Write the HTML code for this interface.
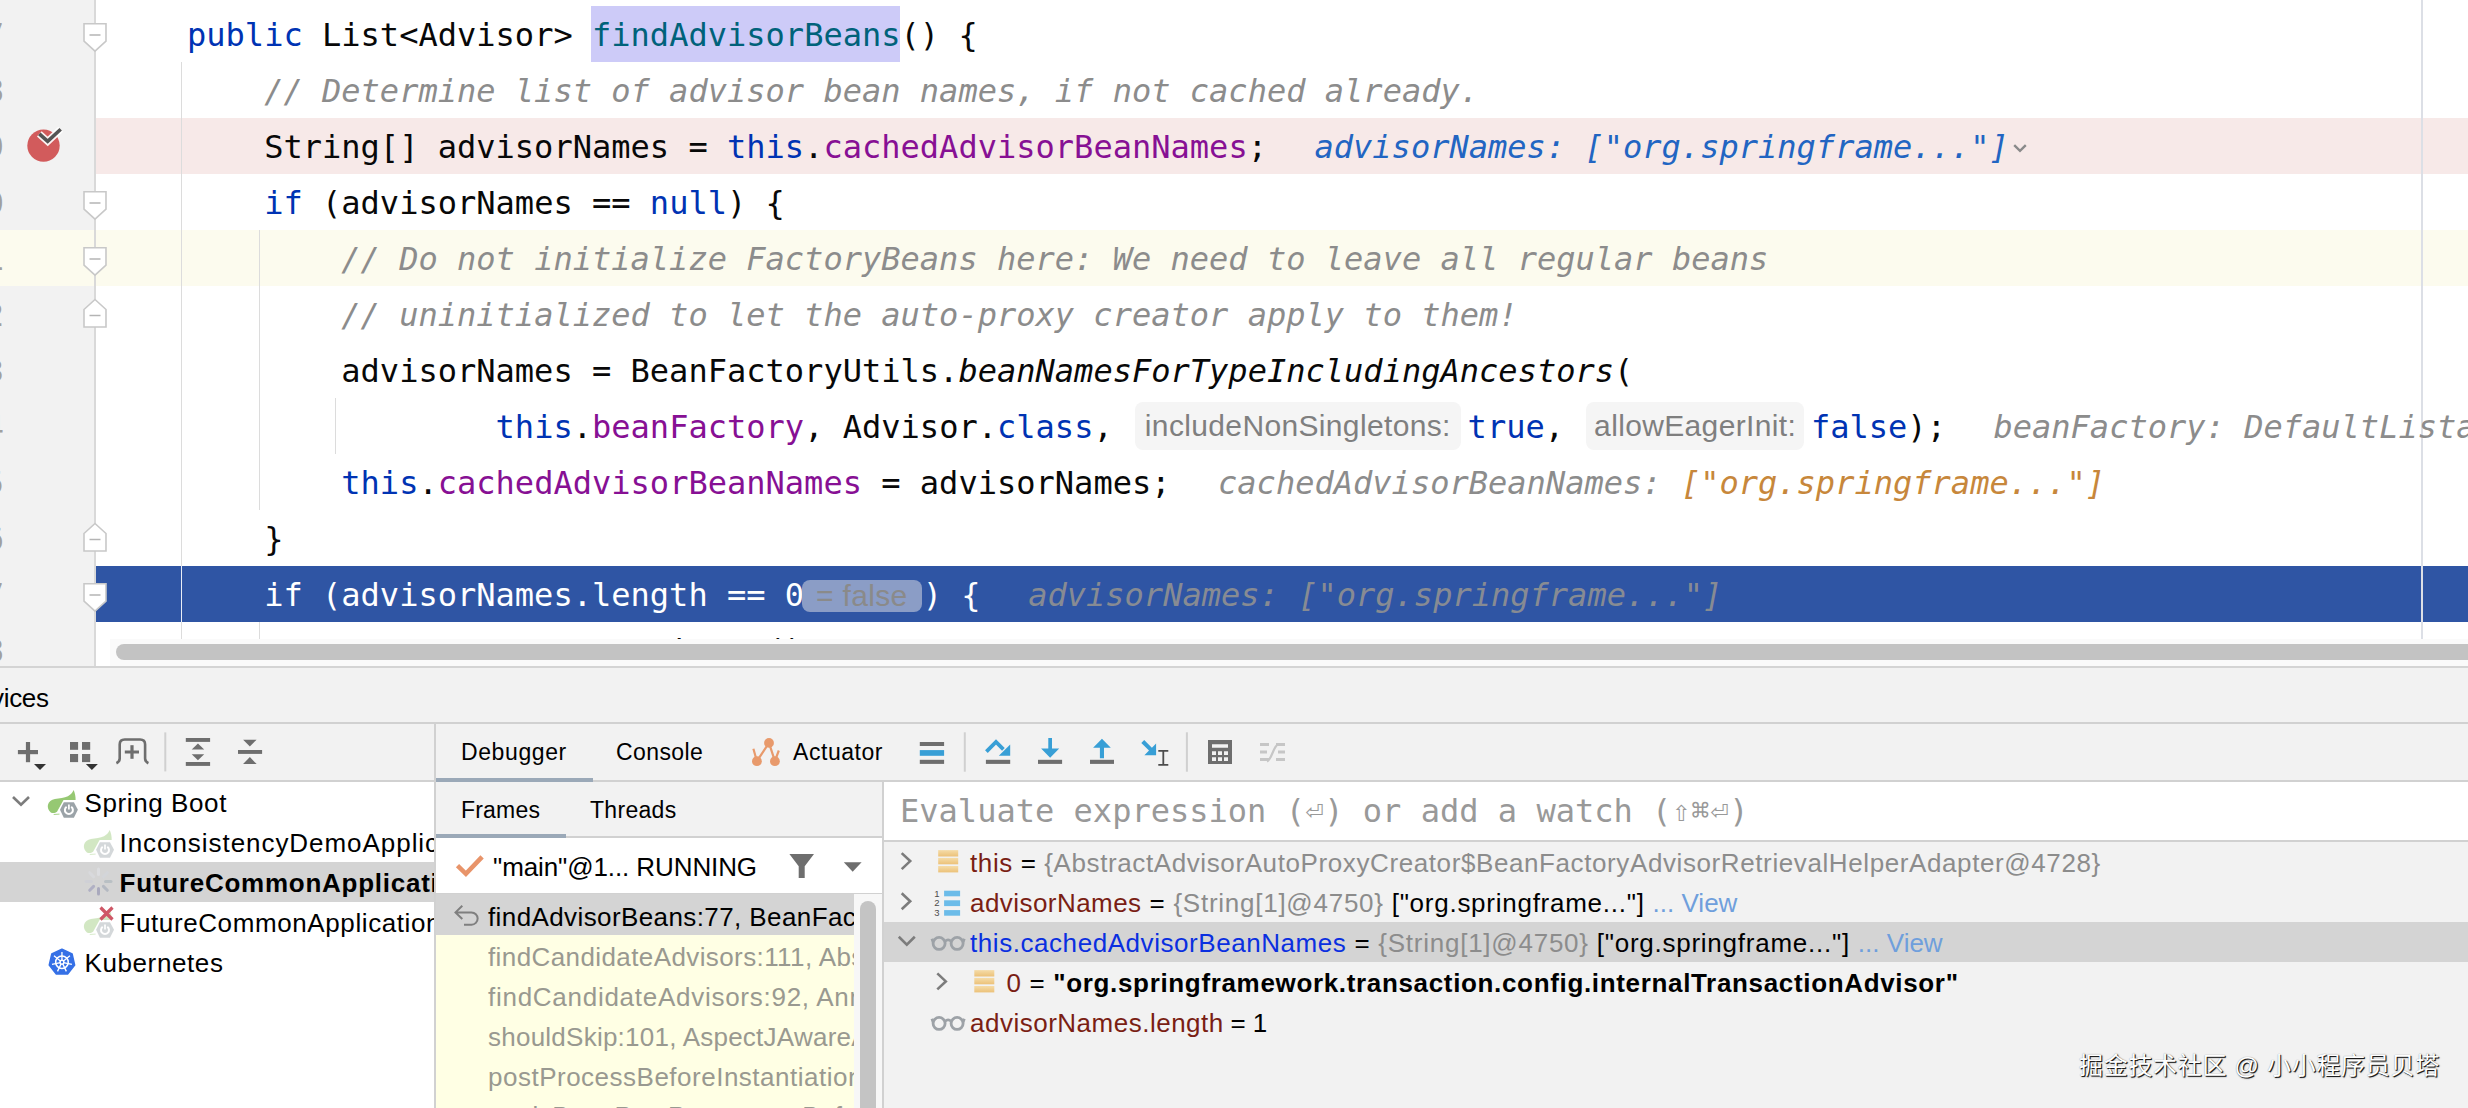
<!DOCTYPE html>
<html lang="en">
<head>
<meta charset="utf-8">
<title>Debugger</title>
<style>
*{box-sizing:border-box;margin:0;padding:0}
html,body{width:2468px;height:1108px;overflow:hidden;background:#f2f2f2}
body{position:relative;font-family:"Liberation Sans","DejaVu Sans",sans-serif;color:#000}
.abs{position:absolute}
/* ---------- editor ---------- */
#editor{position:absolute;left:0;top:0;width:2468px;height:667px;background:#fff;overflow:hidden}
#gutter{position:absolute;left:0;top:0;width:95px;height:667px;background:#f2f2f2}
#gline{position:absolute;left:94px;top:0;width:2px;height:667px;background:#d9d9d9}
.row{position:absolute;left:0;width:2468px;height:56px}
.code{position:absolute;left:187px;height:56px;line-height:56px;white-space:pre;font-family:"DejaVu Sans Mono","Liberation Mono",monospace;font-size:32.04px;color:#080808}
.k{color:#0033b3}
.f{color:#871094}
.c{color:#8c8c8c;font-style:italic}
.m{color:#00627a}
.i{font-style:italic}
.dv{color:#8c8c8c;font-style:italic}
.dvb{color:#2265c2;font-style:italic}
.dvo{color:#c7873b;font-style:italic}
.hint{display:inline-block;vertical-align:top;height:48px;line-height:48px;margin:3px 6.5px 0 2.5px;border-radius:8px;background:#f5f5f5;color:#7f7f7f;font-family:"Liberation Sans",sans-serif;font-size:30px;letter-spacing:.35px;text-align:center;overflow:hidden}
.dbg{margin-left:47.5px}
.sym{display:inline-block;width:19.29px;text-align:center;font-size:30px;vertical-align:top;overflow:visible}
.guide{position:absolute;width:1px;background:#dcdcdc}
.ln{position:absolute;left:-46px;width:50px;text-align:right;font-family:"DejaVu Sans Mono",monospace;font-size:32px;line-height:56px;color:#a0a0a0}
.fold{position:absolute;left:82px;width:26px;height:30px}

/* ---------- bottom ---------- */
.hl{position:absolute;background:#d1d1d1}
.t{position:absolute;white-space:pre;font-size:26px;line-height:40px;height:40px;letter-spacing:.6px;color:#000}
.tab{position:absolute;white-space:pre;font-size:23px;line-height:40px;height:40px;letter-spacing:.3px;color:#000}
.g{color:#8c8c8c}
.vn{color:#7a1e14}
.lnk{color:#6f9fdc;letter-spacing:0}
svg{position:absolute;overflow:visible}
</style>
</head>
<body>
<div id="editor">
  <div id="gutter"></div>
  <!-- line backgrounds -->
  <div class="row" style="top:118px;left:96px;background:#f7e9e8"></div>
  <div class="row" style="top:230px;left:0;background:#fcfbee"></div>
  <div class="row" style="top:566px;left:96px;background:#2f55a4"></div>
  <div class="ln" style="top:7px">77</div><div class="ln" style="top:63px">78</div><div class="ln" style="top:119px">79</div><div class="ln" style="top:175px">80</div><div class="ln" style="top:231px">81</div><div class="ln" style="top:287px">82</div><div class="ln" style="top:343px">83</div><div class="ln" style="top:399px">84</div><div class="ln" style="top:455px">85</div><div class="ln" style="top:511px">86</div><div class="ln" style="top:567px">87</div><div class="ln" style="top:623px">88</div>
  <div class="abs" style="left:591.2px;top:6px;width:308.4px;height:56px;background:#cdcbf8"></div>
  <div id="gline"></div>
  <!-- indent guides -->
  <div class="guide" style="left:181px;top:62px;height:504px"></div>
  <div class="guide" style="left:181px;top:566px;height:56px;background:#e9eef7"></div>
  <div class="guide" style="left:181px;top:622px;height:18px"></div>
  <div class="guide" style="left:259px;top:230px;height:280px"></div>
  <div class="guide" style="left:259px;top:622px;height:18px"></div>
  <div class="guide" style="left:335px;top:398px;height:56px"></div>
  <div class="guide" style="left:2421px;top:0;height:640px;width:2px;background:#dcdfe6"></div>


  <svg id="ic0" style="left:0;top:0" width="200" height="667" viewBox="0 0 200 667">
    <path d="M84 23.7h22v17.500l-11 10-11-10z" fill="#fff" stroke="#c8c8c8" stroke-width="1.600"/><path d="M89.500 35h11" stroke="#b4b4b4" stroke-width="1.500"/><path d="M84 191.7h22v17.500l-11 10-11-10z" fill="#fff" stroke="#c8c8c8" stroke-width="1.600"/><path d="M89.500 203h11" stroke="#b4b4b4" stroke-width="1.500"/><path d="M84 247.7h22v17.500l-11 10-11-10z" fill="#fff" stroke="#c8c8c8" stroke-width="1.600"/><path d="M89.500 259h11" stroke="#b4b4b4" stroke-width="1.500"/><path d="M84 327h22v-17.500l-11-10-11 10z" fill="#fff" stroke="#c8c8c8" stroke-width="1.600"/><path d="M89.500 315.5h11" stroke="#b4b4b4" stroke-width="1.500"/><path d="M84 551h22v-17.500l-11-10-11 10z" fill="#fff" stroke="#c8c8c8" stroke-width="1.600"/><path d="M89.500 539.5h11" stroke="#b4b4b4" stroke-width="1.500"/><path d="M84 583.7h22v17.500l-11 10-11-10z" fill="#fff" stroke="#c8c8c8" stroke-width="1.600"/><path d="M89.500 595h11" stroke="#b4b4b4" stroke-width="1.500"/>
    <circle cx="43.500" cy="145.600" r="16.200" fill="#d25b5c"/>
    <path d="M39.300 133.800l8.400 7.600 13-12.200" stroke="#fff" stroke-width="7" fill="none" stroke-opacity=".92"/>
    <path d="M39.300 133.800l8.400 7.600 13-12.200" stroke="#545454" stroke-width="3.600" fill="none"/>
  </svg>
  <!-- code -->
  <div class="code" style="top:7px"><span class="k">public</span> List&lt;Advisor&gt; <span class="m">findAdvisorBeans</span>() {</div>
  <div class="code" style="top:63px">    <span class="c">// Determine list of advisor bean names, if not cached already.</span></div>
  <div class="code" style="top:119px">    String[] advisorNames = <span class="k">this</span>.<span class="f">cachedAdvisorBeanNames</span>;<span class="dvb dbg">advisorNames: ["org.springframe..."]</span></div>
  <div class="code" style="top:175px">    <span class="k">if</span> (advisorNames == <span class="k">null</span>) {</div>
  <div class="code" style="top:231px">        <span class="c">// Do not initialize FactoryBeans here: We need to leave all regular beans</span></div>
  <div class="code" style="top:287px">        <span class="c">// uninitialized to let the auto-proxy creator apply to them!</span></div>
  <div class="code" style="top:343px">        advisorNames = BeanFactoryUtils.<span class="i">beanNamesForTypeIncludingAncestors</span>(</div>
  <div class="code" style="top:399px">                <span class="k">this</span>.<span class="f">beanFactory</span>, Advisor.<span class="k">class</span>, <span class="hint" style="width:326.6px">includeNonSingletons:</span><span class="k">true</span>, <span class="hint" style="width:218.6px">allowEagerInit:</span><span class="k">false</span>);<span class="dv dbg">beanFactory: DefaultListableBeanFactory@4729</span></div>
  <div class="code" style="top:455px">        <span class="k">this</span>.<span class="f">cachedAdvisorBeanNames</span> = advisorNames;<span class="dv dbg">cachedAdvisorBeanNames: </span><span class="dvo">["org.springframe..."]</span></div>
  <div class="code" style="top:511px">    }</div>
  <div class="code" style="top:567px;color:#fff">    if (advisorNames.length == 0<span class="hint" style="width:119.7px;height:32px;line-height:31px;margin:13px 1.2px 0 -2.2px;background:#8b9dc6;color:#8a8a8a">= false</span>) {<span class="dv dbg" style="color:#878b93">advisorNames: ["org.springframe..."]</span></div>
  <div class="code" style="top:623px">        <span class="k">return new</span> ArrayList&lt;&gt;();</div>

  <svg style="left:2010px;top:138px" width="20" height="20" viewBox="0 0 20 20"><path d="M4.200 7.200l5.800 5.600 5.800-5.600" fill="none" stroke="#8a8a8a" stroke-width="2.400"/></svg>
  <!-- scrollbar -->
  <div class="abs" style="left:110px;top:639px;width:2358px;height:28px;background:#fafafa"></div>
  <div class="abs" style="left:116px;top:644px;width:2400px;height:16px;border-radius:8px;background:#c3c3c3"></div>
</div>
<div class="abs" style="left:0;top:666px;width:2468px;height:2px;background:#d4d4d4"></div>

<div id="bottom">
  <!-- Services header -->
  <div class="t" style="left:0;top:678px;width:48.6px;letter-spacing:-.35px;display:flex;justify-content:flex-end;overflow:visible"><span>Services</span></div>
  <div class="hl" style="left:0;top:722px;width:2468px;height:2px"></div>
  <div class="hl" style="left:0;top:780px;width:2468px;height:2px"></div>
  <!-- left tree -->
  <div class="abs" style="left:0;top:782px;width:434px;height:326px;background:#fff;overflow:hidden" id="tree">
    <div class="abs" style="left:0;top:80px;width:434px;height:40px;background:#d4d4d4"></div>
    <div class="t" style="left:84.500px;top:1px">Spring Boot</div>
    <div class="t" style="left:119.500px;top:41px;letter-spacing:.95px">InconsistencyDemoApplication</div>
    <div class="t" style="left:119.500px;top:81px;font-weight:bold;letter-spacing:.75px">FutureCommonApplication</div>
    <div class="t" style="left:119.500px;top:121px">FutureCommonApplication</div>
    <div class="t" style="left:84.500px;top:161px">Kubernetes</div>
  </div>
  <div class="hl" style="left:434px;top:724px;width:2px;height:384px"></div>
  <!-- middle: tabs -->
  <div class="tab" style="left:461px;top:732px;letter-spacing:.6px">Debugger</div>
  <div class="tab" style="left:616px;top:732px;letter-spacing:.4px">Console</div>
  <div class="tab" style="left:793px;top:732px;letter-spacing:.55px">Actuator</div>
  <div class="abs" style="left:436px;top:778px;width:157px;height:4px;background:#9ba9b8"></div>
  <div class="tab" style="left:461px;top:790px;letter-spacing:.2px">Frames</div>
  <div class="tab" style="left:590px;top:790px">Threads</div>
  <div class="hl" style="left:436px;top:836px;width:446px;height:2px"></div>
  <div class="abs" style="left:436px;top:834px;width:130px;height:4px;background:#9ba9b8"></div>
  <!-- thread row -->
  <div class="abs" style="left:436px;top:838px;width:446px;height:56px;background:#fff"></div>
  <div class="t" style="left:493px;top:847px;letter-spacing:-.1px">"main"@1... RUNNING</div>
  <div class="hl" style="left:436px;top:893px;width:446px;height:2px"></div>
  <!-- frames -->
  <div class="abs" style="left:436px;top:894px;width:418px;height:214px;background:#ffffe4;overflow:hidden" id="frames">
    <div class="abs" style="left:0;top:0;width:418px;height:41px;background:#d4d4d4"></div>
    <div class="t" style="left:52px;top:3px;letter-spacing:.4px">findAdvisorBeans:77, BeanFactoryAdvisorRetrievalHelper</div>
    <div class="t g" style="left:52px;top:43px;letter-spacing:.4px;color:#999990">findCandidateAdvisors:111, AbstractAdvisorAutoProxyCreator</div>
    <div class="t g" style="left:52px;top:83px;letter-spacing:.73px;color:#999990">findCandidateAdvisors:92, AnnotationAwareAspectJAutoProxyCreator</div>
    <div class="t g" style="left:52px;top:123px;letter-spacing:.24px;color:#999990">shouldSkip:101, AspectJAwareAdvisorAutoProxyCreator</div>
    <div class="t g" style="left:52px;top:163px;letter-spacing:.5px;color:#999990">postProcessBeforeInstantiation:251, AbstractAutoProxyCreator</div>
    <div class="t g" style="left:52px;top:202px;letter-spacing:.4px;color:#999990">applyBeanPostProcessorsBeforeInstantiation:1160, AbstractAutowireCapableBeanFactory</div>
  </div>
  <div class="abs" style="left:854px;top:894px;width:28px;height:214px;background:#f7f7f7"></div>
  <div class="abs" style="left:860px;top:901px;width:16px;height:230px;border-radius:8px;background:#c4c4c4"></div>
  <div class="hl" style="left:882px;top:782px;width:2px;height:326px"></div>
  <!-- right: evaluate + variables -->
  <div class="abs" style="left:884px;top:782px;width:1584px;height:58px;background:#fff"></div>
  <div class="hl" style="left:884px;top:840px;width:1584px;height:2px"></div>
  <div class="abs" id="eval" style="left:900px;top:783px;height:56px;line-height:56px;white-space:pre;font-family:'DejaVu Sans Mono','Liberation Mono',monospace;font-size:32.04px;color:#999">Evaluate expression (<span class="sym">&#x23CE;</span>) or add a watch (<span class="sym">&#x21E7;</span><span class="sym">&#x2318;</span><span class="sym">&#x23CE;</span>)</div>
  <div class="abs" style="left:884px;top:922px;width:1584px;height:40px;background:#d4d4d4"></div>
  <div class="t" style="left:970px;top:843px;letter-spacing:.6px"><span class="vn">this</span> = <span class="g">{AbstractAdvisorAutoProxyCreator$BeanFactoryAdvisorRetrievalHelperAdapter@4728}</span></div>
  <div class="t" style="left:970px;top:883px;letter-spacing:.74px"><span class="vn" style="letter-spacing:.45px">advisorNames</span> = <span class="g">{String[1]@4750}</span> ["org.springframe..."] <span class="lnk">... View</span></div>
  <div class="t" style="left:970px;top:923px;letter-spacing:.75px"><span style="color:#0a2fe0;letter-spacing:.56px">this.cachedAdvisorBeanNames</span> = <span class="g">{String[1]@4750}</span> ["org.springframe..."] <span class="lnk">... View</span></div>
  <div class="t" style="left:1006.500px;top:963px;letter-spacing:.66px"><span class="vn">0</span> = <b>"org.springframework.transaction.config.internalTransactionAdvisor"</b></div>
  <div class="t" style="left:970px;top:1003px;letter-spacing:.5px;word-spacing:-1px"><span class="vn">advisorNames.length</span> = 1</div>

<svg id="ic1" style="left:0;top:0" width="2468" height="1108" viewBox="0 0 2468 1108">
  <!-- services toolbar -->
  <g fill="#6e6e6e">
    <rect x="17.9" y="750" width="20.1" height="4.2"/><rect x="25.9" y="742" width="4.2" height="20.2"/>
    <rect x="70" y="742" width="8.1" height="7.8"/><rect x="82" y="742" width="8.2" height="7.8"/>
    <rect x="70" y="754" width="8.1" height="8.1"/><rect x="82" y="754" width="8.2" height="8.1"/>
    <rect x="124.8" y="750.5" width="14.2" height="3"/><rect x="130.4" y="745.2" width="3.2" height="13.6"/>
    <rect x="185.8" y="738" width="24.3" height="3.9"/><rect x="185.8" y="762" width="24.3" height="3.9"/>
    <path d="M191.7 749.6h12.5l-6.25-6z"/><path d="M191.7 754.2h12.5l-6.25 6z"/>
    <rect x="238" y="750" width="24.1" height="3.9"/>
    <path d="M243.1 739.7h13.5l-6.75 6.9z"/><path d="M243.1 764h13.5l-6.75-6.9z"/>
  </g>
  <path d="M116.400 763.200c2.200-1 3.300-2.400 3.300-4.600v-14.100c0-3.200 1.800-5 5-5h15.400c3.200 0 5 1.800 5 5v14.100c0 2.200 1.100 3.600 3.300 4.600" fill="none" stroke="#6e6e6e" stroke-width="2.6"/>
  <path d="M34 763.9h12l-6 6.200z" fill="#333"/><path d="M85.900 763.900h12l-6 6.200z" fill="#333"/>
  <rect x="164.300" y="732.400" width="2" height="39" fill="#d0d0d0"/>
  <!-- debugger toolbar -->
  <rect x="919.8" y="742" width="24.300" height="4" fill="#6e6e6e"/><rect x="919.800" y="750.100" width="24.300" height="5.700" fill="#389fd6"/><rect x="919.800" y="759.800" width="24.300" height="4.100" fill="#6e6e6e"/>
  <rect x="963.800" y="732.300" width="2" height="39.400" fill="#d0d0d0"/>
  <rect x="1185.900" y="732.300" width="2" height="39.400" fill="#d0d0d0"/>
  <g fill="#6e6e6e"><rect x="985.900" y="759.800" width="24.300" height="4.100"/><rect x="1038" y="759.800" width="24.100" height="4.100"/><rect x="1090" y="759.800" width="24" height="4.100"/></g>
  <g fill="#389fd6">
    <!-- step over -->
    <path d="M986.400 751.600l9.600-9.600 7.400 7.400" stroke="#389fd6" stroke-width="3.800" fill="none"/><path d="M1010.200 744.400v11.400h-11.400z"/>
    <!-- step into -->
    <path d="M1048.300 738h3.700v10.500h7.200l-9.050 9.300-9.050-9.300h7.200z"/>
    <!-- step out -->
    <path d="M1099.900 758.300h4.100v-10.600h6.800l-8.850-9-8.850 9h6.800z"/>
    <!-- run to cursor -->
    <path d="M1141.300 742.900l2.900-2.900 7.700 7.700 4.200-4.200v11.700h-11.700l4.600-4.600z"/>
  </g>
  <path d="M1158.300 750.800h10M1158.300 764.800h10M1163.300 750.800v14" stroke="#4d4d4d" stroke-width="1.800" fill="none"/>
  <!-- calculator -->
  <path fill="#6e6e6e" fill-rule="evenodd" d="M1208 740h24v24h-24zM1212 744.200v3.600h16v-3.600zM1212 751.300v3.700h4v-3.700zM1218 751.300v3.700h4v-3.700zM1224 751.300v3.700h4v-3.700zM1212 757.300v3.700h4v-3.700zM1218 757.300v3.700h4v-3.700zM1224 757.300v3.700h4v-3.700z"/>
  <!-- trace (disabled) -->
  <g stroke="#c6c6c6" stroke-width="3" fill="none"><path d="M1260 744.500h9M1260 752h7M1260 759.500h9M1276 744.500h9M1278 752h7M1276 759.500h9"/><path d="M1267 761.500c5-2 6-15 11-17" stroke-width="2.200"/></g>
</svg>

<svg id="ic2" style="left:0;top:0" width="2468" height="1108" viewBox="0 0 2468 1108">
  <defs><linearGradient id="ob" x1="0" y1="0" x2="0" y2="1"><stop offset="0" stop-color="#f5dca8"/><stop offset="1" stop-color="#ecc178"/></linearGradient></defs>
  <!-- tree icons -->
  <g fill="none" stroke="#7c7c7c" stroke-width="2.600"><path d="M13.0 797.0l8 7.800 8-7.800"/></g>
  <g transform="translate(47.4,790)" opacity="1"><path d="M26.200 .100C27.500 3 28.300 6.500 28.200 9.900L16.100 9.900L9.600 21.800C8 23 5.500 23.500 3.400 22.500C1 20.500 0 17.500 .500 15C1.200 11.500 4 9.500 7.500 9C12 8.300 17 8 20.500 6.300C23 5 25 3 26.200 .100Z" fill="#96c873"/><path d="M6.300 24.500l5.800-.400" stroke="#a9d48c" stroke-width="1"/><path d="M16.400 12.200h10.100l4 7.500-4 8.100h-10.100l-3.800-8z" fill="#9ba3a8"/><path d="M19.200 16.700a4 4 0 1 0 4.600 0" fill="none" stroke="#fff" stroke-width="2"/><path d="M21.500 14.600v5" stroke="#fff" stroke-width="1.700"/></g>
  <g transform="translate(83.5,830)" opacity="0.42"><path d="M26.200 .100C27.500 3 28.300 6.500 28.200 9.900L16.100 9.900L9.600 21.800C8 23 5.500 23.500 3.400 22.500C1 20.500 0 17.500 .500 15C1.200 11.500 4 9.500 7.500 9C12 8.300 17 8 20.500 6.300C23 5 25 3 26.200 .100Z" fill="#96c873"/><path d="M6.300 24.500l5.800-.400" stroke="#a9d48c" stroke-width="1"/><path d="M16.400 12.200h10.100l4 7.500-4 8.100h-10.100l-3.800-8z" fill="#9ba3a8"/><path d="M19.200 16.700a4 4 0 1 0 4.600 0" fill="none" stroke="#fff" stroke-width="2"/><path d="M21.500 14.600v5" stroke="#fff" stroke-width="1.700"/></g>
  <g transform="translate(83.5,910)" opacity="0.42"><path d="M26.200 .100C27.500 3 28.300 6.500 28.200 9.900L16.100 9.900L9.600 21.800C8 23 5.500 23.500 3.400 22.500C1 20.500 0 17.500 .500 15C1.200 11.500 4 9.500 7.500 9C12 8.300 17 8 20.500 6.300C23 5 25 3 26.200 .100Z" fill="#96c873"/><path d="M6.300 24.500l5.800-.400" stroke="#a9d48c" stroke-width="1"/><path d="M16.400 12.200h10.100l4 7.500-4 8.100h-10.100l-3.800-8z" fill="#9ba3a8"/><path d="M19.200 16.700a4 4 0 1 0 4.600 0" fill="none" stroke="#fff" stroke-width="2"/><path d="M21.500 14.600v5" stroke="#fff" stroke-width="1.700"/></g>
  <path d="M100.500 907.500l12 12M112.500 907.500l-12 12" stroke="#cf5766" stroke-width="3.200" fill="none"/>
  <g stroke-width="3" stroke-linecap="round" fill="none" transform="translate(.5,-1.5)">
    <path d="M98 870.500v5.500" stroke="#dcdde0"/><path d="M106.800 874.200l-3.900 3.900" stroke="#d3d5d9"/><path d="M110.500 883h-5.500" stroke="#b9c0c4"/><path d="M106.800 891.800l-3.900-3.900" stroke="#b4b9c2"/>
    <path d="M98 895.500v-5.500" stroke="#a9a9bd"/><path d="M89.200 891.800l3.900-3.900" stroke="#b0b0c4"/><path d="M85.500 883h5.500" stroke="#cfd0d6"/><path d="M89.200 874.200l3.900 3.900" stroke="#d8d9dc"/>
  </g>
  <!-- kubernetes -->
  <path d="M61.95 949.20L72.11 954.09L74.62 965.09L67.59 973.91L56.31 973.91L49.28 965.09L51.79 954.09Z" fill="#3570e6" stroke="#3570e6" stroke-width="1.600" stroke-linejoin="round"/>
  <g fill="none" stroke="#fff"><circle cx="61.95" cy="962.2" r="6.300" stroke-width="1.500"/><path d="M61.95 960.60L61.95 952.00M63.20 961.20L69.92 955.84M63.51 962.56L71.89 964.47M62.64 963.64L66.38 971.39M61.26 963.64L57.52 971.39M60.39 962.56L52.01 964.47M60.70 961.20L53.98 955.84" stroke-width="1.300"/><circle cx="61.95" cy="962.2" r="1.900" stroke-width="1.400"/></g>
  <!-- actuator -->
  <g fill="#e89a6c"><circle cx="769" cy="742.900" r="4.900"/><circle cx="756.900" cy="761.200" r="4.900"/><circle cx="774.900" cy="761.200" r="4.900"/></g>
  <path d="M769 742.900l-12.100 18.300M769 742.900l5.900 18.300M753.400 748.700l3.500 12.500M778.800 750.500l-3.900 10.700" stroke="#e89a6c" stroke-width="2.200" fill="none"/>
  <!-- thread row -->
  <path d="M457.500 865.600l8.400 8.200 16.200-17" stroke="#e8946a" stroke-width="4.600" fill="none"/>
  <path d="M789.400 853.900h24.600l-9.300 12.300v11.800h-6v-11.800z" fill="#6e6e6e"/>
  <path d="M843.800 862.300h17.800l-8.900 9.400z" fill="#6e6e6e"/>
  <path d="M462.300 905.800l-6.800 6.600 6.800 6.600M456 912.400h15.500a6.100 6.100 0 0 1 0 12.300h-7.500" stroke="#7f7f7f" stroke-width="2" fill="none"/>
  <!-- variables -->
  <g fill="none" stroke="#7c7c7c" stroke-width="2.600">
    <path d="M901.7 853.1l8.500 8-8.500 8"/><path d="M901.7 893.2l8.500 8-8.500 8"/><path d="M898.8 936.8l8 7.800 8-7.800"/><path d="M937.3 973.4l8.500 8-8.500 8"/>
  </g>
  <rect x="938.2" y="850.1" width="20" height="6.400" fill="url(#ob)"/><rect x="938.2" y="857.9" width="20" height="6.400" fill="url(#ob)"/><rect x="938.2" y="866.0" width="20" height="6.400" fill="url(#ob)"/><rect x="974.3" y="970.1" width="20" height="6.400" fill="url(#ob)"/><rect x="974.3" y="977.9" width="20" height="6.400" fill="url(#ob)"/><rect x="974.3" y="986.0" width="20" height="6.400" fill="url(#ob)"/>
  <g fill="#6cbce9"><rect x="944.100" y="890.700" width="16" height="5.600"/><rect x="944.100" y="900.300" width="16" height="5.800"/><rect x="944.100" y="910.100" width="16" height="5.600"/></g>
  <g font-family="Liberation Sans,sans-serif" font-size="9.500" fill="#4d4d4d"><text x="934.300" y="896.600">1</text><text x="934.300" y="906.400">2</text><text x="934.300" y="916.200">3</text></g>
  <g fill="none" stroke="#9da2a7" stroke-width="2.800"><circle cx="939.1" cy="943.4" r="6"/><circle cx="957.1" cy="943.4" r="6"/><path d="M944.9 941.4q3.200-3 6.400 0M933.1 941.9l-1.200-3.200M963.1 941.9l1.200-3.200"/></g><g fill="none" stroke="#9da2a7" stroke-width="2.800"><circle cx="939.1" cy="1023.4" r="6"/><circle cx="957.1" cy="1023.4" r="6"/><path d="M944.9 1021.4q3.200-3 6.400 0M933.1 1021.9l-1.200-3.200M963.1 1021.9l1.200-3.200"/></g>
</svg>
  <!-- watermark -->
  <div class="abs" id="wm" style="left:2079px;top:1046px;height:40px;line-height:40px;white-space:pre;font-family:'Liberation Sans','Noto Sans CJK SC',sans-serif;font-size:24px;letter-spacing:.7px;color:#fff;text-shadow:1px 1px 0 rgba(0,0,0,.8),1px 1px 1.5px rgba(0,0,0,.6),0 0 1px rgba(0,0,0,.4)">掘金技术社区 @ 小小程序员贝塔</div>
</div>
</body>
</html>
